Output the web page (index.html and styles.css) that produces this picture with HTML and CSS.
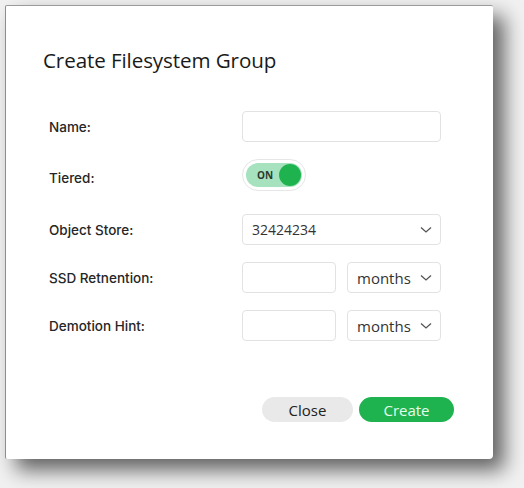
FILE: index.html
```html
<!DOCTYPE html>
<html>
<head>
<meta charset="utf-8">
<link rel="stylesheet" href="styles.css">
</head>
<body>
<div class="dialog">
  <h1 class="title">Create Filesystem Group</h1>
  <div class="form">
    <div class="row">
      <div class="label">Name:</div>
      <div class="field wide"></div>
    </div>
    <div class="row row-toggle">
      <div class="label">Tiered:</div>
      <div class="toggle">
        <div class="track">
          <span class="on">ON</span>
          <span class="knob"></span>
        </div>
      </div>
    </div>
    <div class="row">
      <div class="label">Object Store:</div>
      <div class="field wide select">
        <span class="value">32424234</span>
        <svg class="chev" width="12" height="8" viewBox="0 0 12 8"><polyline points="1,1.5 6,6 11,1.5" fill="none" stroke="#555" stroke-width="1.3"/></svg>
      </div>
    </div>
    <div class="row">
      <div class="label">SSD Retnention:</div>
      <div class="pair">
        <div class="field short"></div>
        <div class="field unit select">
          <span class="value">months</span>
          <svg class="chev" width="12" height="8" viewBox="0 0 12 8"><polyline points="1,1.5 6,6 11,1.5" fill="none" stroke="#555" stroke-width="1.3"/></svg>
        </div>
      </div>
    </div>
    <div class="row">
      <div class="label">Demotion Hint:</div>
      <div class="pair">
        <div class="field short"></div>
        <div class="field unit select">
          <span class="value">months</span>
          <svg class="chev" width="12" height="8" viewBox="0 0 12 8"><polyline points="1,1.5 6,6 11,1.5" fill="none" stroke="#555" stroke-width="1.3"/></svg>
        </div>
      </div>
    </div>
  </div>
  <div class="actions">
    <button class="btn close">Close</button>
    <button class="btn create">Create</button>
  </div>
</div>
</body>
</html>
```

FILE: styles.css
```css
html, body {
  margin: 0;
  padding: 0;
  background: #f1f1f1;
  font-family: "Open Sans", "Noto Sans", sans-serif;
  width: 524px;
  height: 488px;
  overflow: hidden;
}
.dialog {
  margin: 5px 0 0 5px;
  width: 488px;
  height: 454px;
  box-sizing: border-box;
  background: #fff;
  border-left: 1px solid #8e8e8e;
  border-top: 1px solid #9a9a9a;
  border-radius: 2px 2px 4px 2px;
  box-shadow: 11px 11px 20px rgba(0,0,0,0.6);
  padding: 42px 39px 0 37px;
  display: flex;
  flex-direction: column;
}
.title {
  margin: 0;
  font-size: 20.6px;
  line-height: 24px;
  font-weight: 400;
  color: #1a1a1a;
  letter-spacing: -0.1px;
}
.form {
  margin-top: 39px;
  padding-left: 6px;
  display: flex;
  flex-direction: column;
  gap: 17px;
}
.row {
  display: flex;
  align-items: center;
  height: 31px;
}
.row-toggle {
  height: 38px;
  align-items: flex-start;
}
.row-toggle .label {
  line-height: 32px;
  padding-top: 3px;
}
.label {
  width: 193px;
  font-family: Inter, "Open Sans", sans-serif;
  font-size: 13.5px;
  font-weight: 500;
  color: #262626;
}
.field {
  box-sizing: border-box;
  height: 31px;
  border: 1px solid #e2e2e2;
  border-radius: 4px;
  background: #fff;
}
.wide { width: 199px; }
.pair { display: flex; gap: 11px; }
.short { width: 94px; }
.unit { width: 94px; }
.select {
  display: flex;
  align-items: center;
  justify-content: space-between;
  padding: 0 8px 0 9px;
}
.value {
  font-size: 14px;
  color: #333;
}
.unit .value { font-size: 15px; }
.chev { display: block; }
.toggle {
  box-sizing: border-box;
  width: 64px;
  height: 32px;
  border: 1px solid #e6e6e6;
  border-radius: 16px;
  padding: 3px;
}
.track {
  height: 24px;
  border-radius: 12px;
  background: #a7e2bf;
  display: flex;
  align-items: center;
  justify-content: space-between;
  padding: 0 1px 0 11px;
}
.on {
  font-size: 10px;
  font-weight: 700;
  color: #2b3a30;
}
.knob {
  width: 22px;
  height: 22px;
  border-radius: 50%;
  background: #1fb350;
}
.actions {
  margin-top: 56px;
  display: flex;
  justify-content: flex-end;
  gap: 6px;
}
.btn {
  border: none;
  height: 25px;
  border-radius: 13px;
  font-family: inherit;
  font-size: 15px;
  padding: 0;
}
.close {
  width: 91px;
  background: #e9e9e9;
  color: #222;
}
.create {
  width: 95px;
  background: #1fb350;
  color: #e6fbeb;
}
```
